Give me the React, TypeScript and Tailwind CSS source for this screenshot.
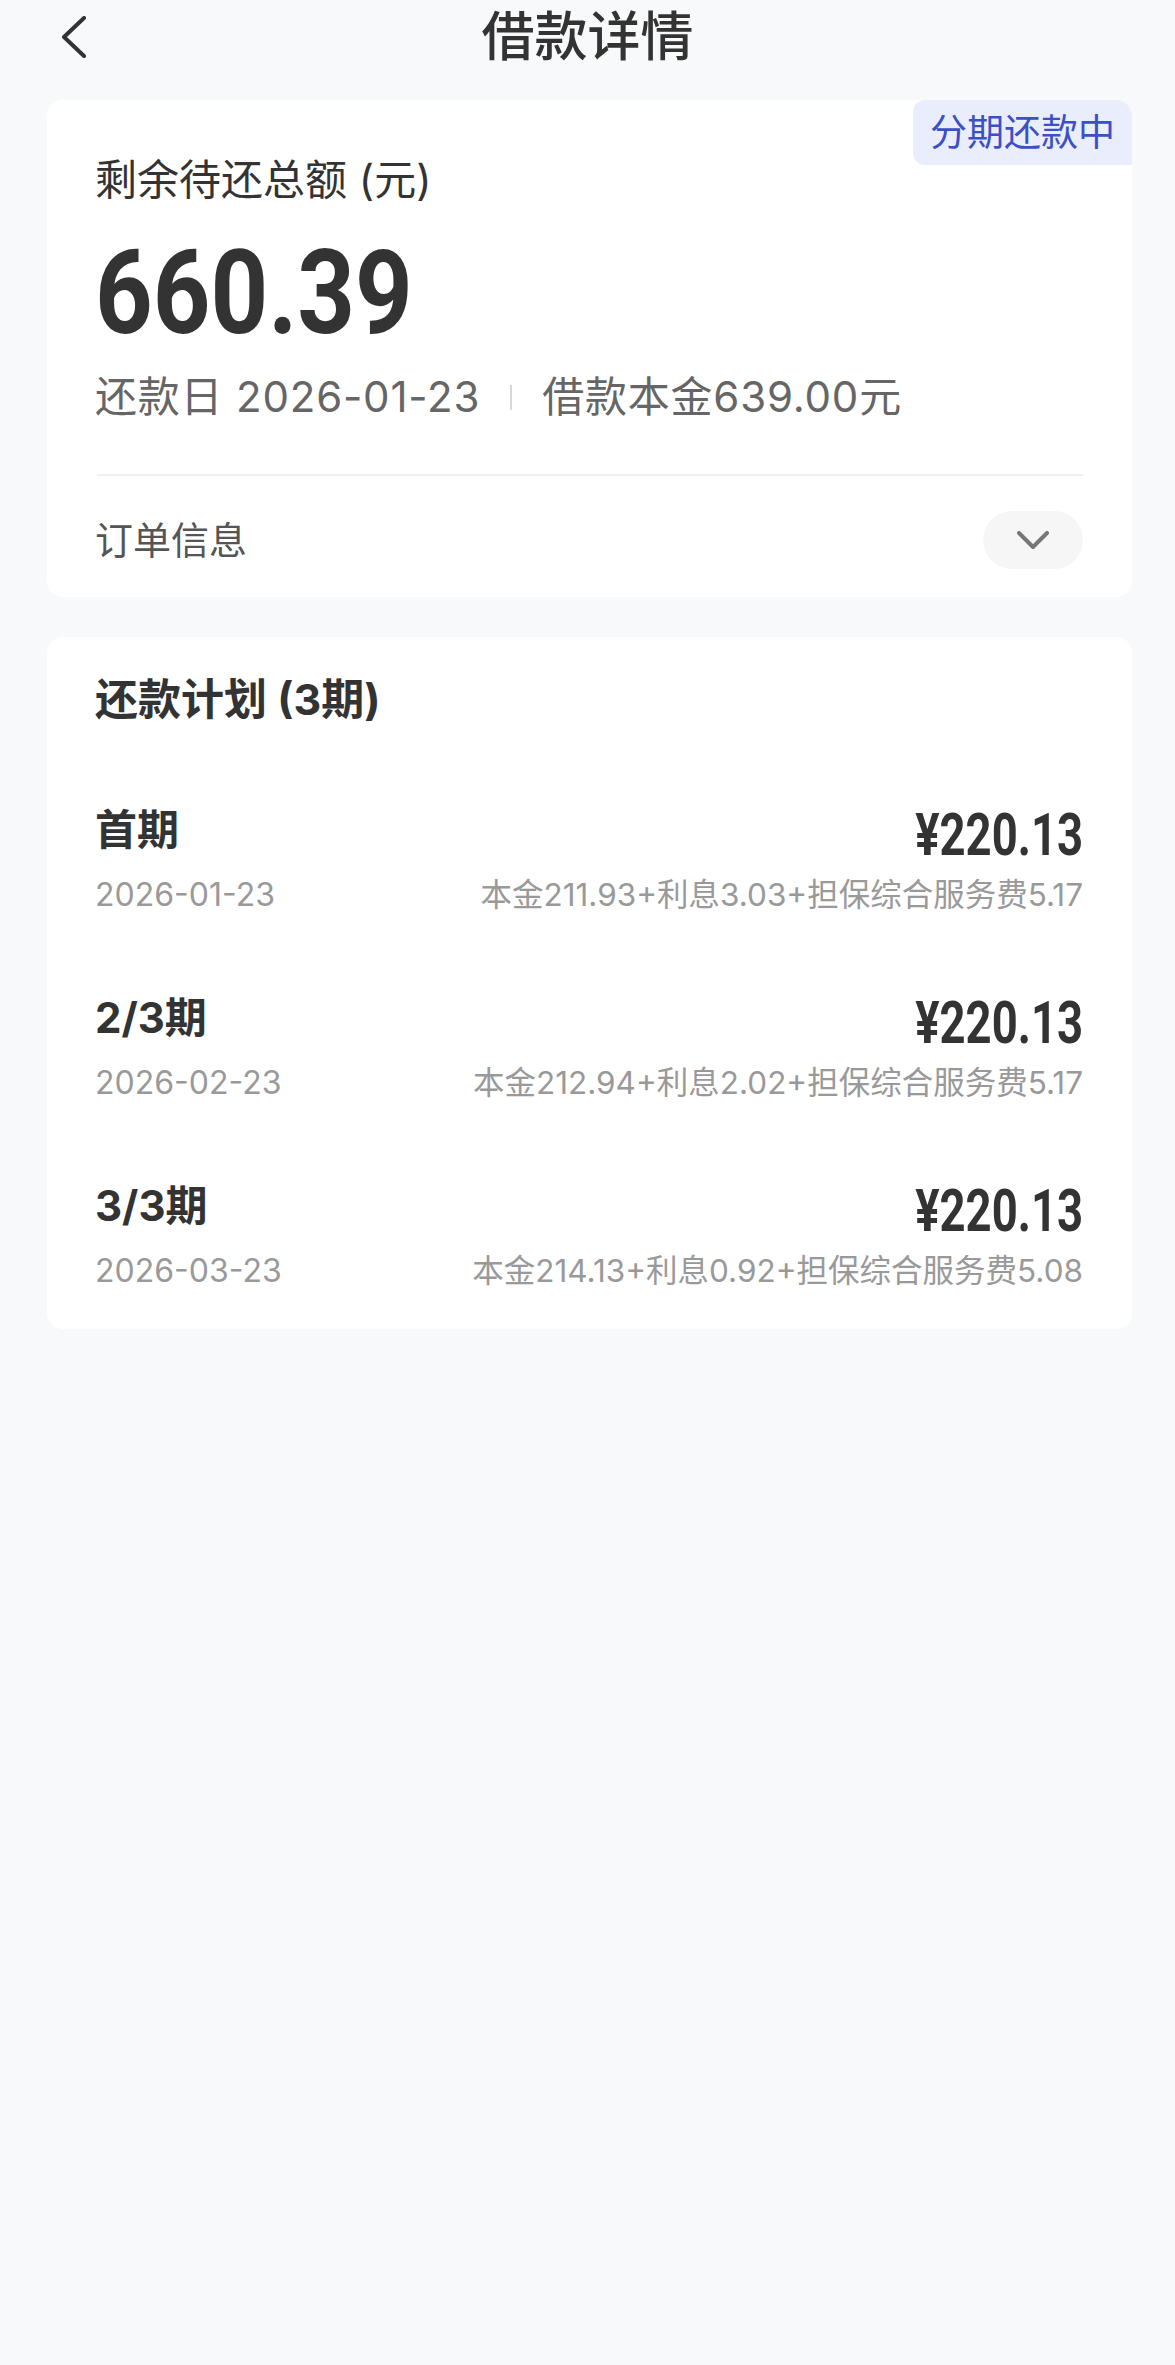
import React from "react"

interface Installment {
  name: string
  date: string
  amount: string
  detail: string
}

const plan: Installment[] = [
  { name: "首期", date: "2026-01-23", amount: "220.13", detail: "本金211.93+利息3.03+担保综合服务费5.17" },
  { name: "2/3期", date: "2026-02-23", amount: "220.13", detail: "本金212.94+利息2.02+担保综合服务费5.17" },
  { name: "3/3期", date: "2026-03-23", amount: "220.13", detail: "本金214.13+利息0.92+担保综合服务费5.08" },
]

function BackIcon() {
  return (
    <svg width="24" height="42" viewBox="0 0 24 42" fill="none">
      <path d="M22 2 L2 21 L22 40" stroke="#333" strokeWidth="4" strokeLinecap="round" strokeLinejoin="round" />
    </svg>
  )
}

function ChevronDown() {
  return (
    <svg width="32" height="19" viewBox="0 0 32 19" fill="none">
      <path d="M2 2 L16 16 L30 2" stroke="#777" strokeWidth="4" strokeLinecap="round" strokeLinejoin="round" />
    </svg>
  )
}

export default function App() {
  return (
    <div className="min-h-[2365px] bg-[#f8f9fb] font-['Inter','Noto_Sans_CJK_SC',sans-serif] text-[#333]">
      {/* Header */}
      <header className="grid h-[74px] grid-cols-[1fr_auto_1fr] items-center pl-[62px] pr-[62px]">
        <div className="flex">
          <BackIcon />
        </div>
        <h1 className="text-[53px] font-medium leading-none">借款详情</h1>
        <div />
      </header>

      {/* Summary */}
      <section className="relative ml-[47px] mr-[43px] mt-[26px] rounded-[16px] bg-white pl-[48px] pr-[49px] pt-[55px] pb-[28px]">
        <div className="absolute right-0 top-0 flex h-[65px] items-center rounded-[12px] rounded-br-none rounded-tr-[16px] bg-[#eaedfb] px-[17px] text-[37px] leading-none text-[#3c50c6]">
          分期还款中
        </div>
        <p className="text-[42px] leading-[50px]">剩余待还总额 (元)</p>
        <p className="mt-[30px] font-['Roboto',sans-serif] text-[117px] font-bold leading-none">
          <span className="inline-block origin-left scale-x-[0.86]">660.39</span>
        </p>
        <div className="mt-[20px] flex items-center text-[42px] leading-[50px] tracking-[0.8px] text-[#666]">
          <span>还款日 2026-01-23</span>
          <span className="mx-[30px] h-[25px] w-[2px] bg-[#d8d8d8]" />
          <span>借款本金639.00元</span>
        </div>
        <div className="ml-[2px] mt-[52px] h-[2px] bg-[#f0f0f0]" />
        <div className="mt-[35px] flex items-center justify-between">
          <span className="text-[38px] leading-[50px] text-[#555]">订单信息</span>
          <button className="flex h-[58px] w-[100px] items-center justify-center rounded-full bg-[#f6f6f6]">
            <ChevronDown />
          </button>
        </div>
      </section>

      {/* Repayment plan */}
      <section className="ml-[47px] mr-[43px] mt-[40px] rounded-[16px] bg-white pl-[48px] pr-[49px] pt-[37px] pb-[38px]">
        <h2 className="text-[43px] font-bold leading-[50px]">还款计划 (3期)</h2>
        <div className="mt-[81px] flex flex-col gap-[78px]">
          {plan.map((item) => (
            <div key={item.name}>
              <div className="flex items-start justify-between">
                <span className="text-[42px] font-bold leading-[50px]">{item.name}</span>
                <span className="font-['Roboto',sans-serif] text-[59px] font-bold leading-none">
                  <span className="inline-block origin-right scale-x-[0.77]">¥{item.amount}</span>
                </span>
              </div>
              <div className="mt-[11px] flex justify-between text-[32px] leading-[40px] text-[#999]">
                <span>{item.date}</span>
                <span className="text-[31.5px]">{item.detail}</span>
              </div>
            </div>
          ))}
        </div>
      </section>
    </div>
  )
}
